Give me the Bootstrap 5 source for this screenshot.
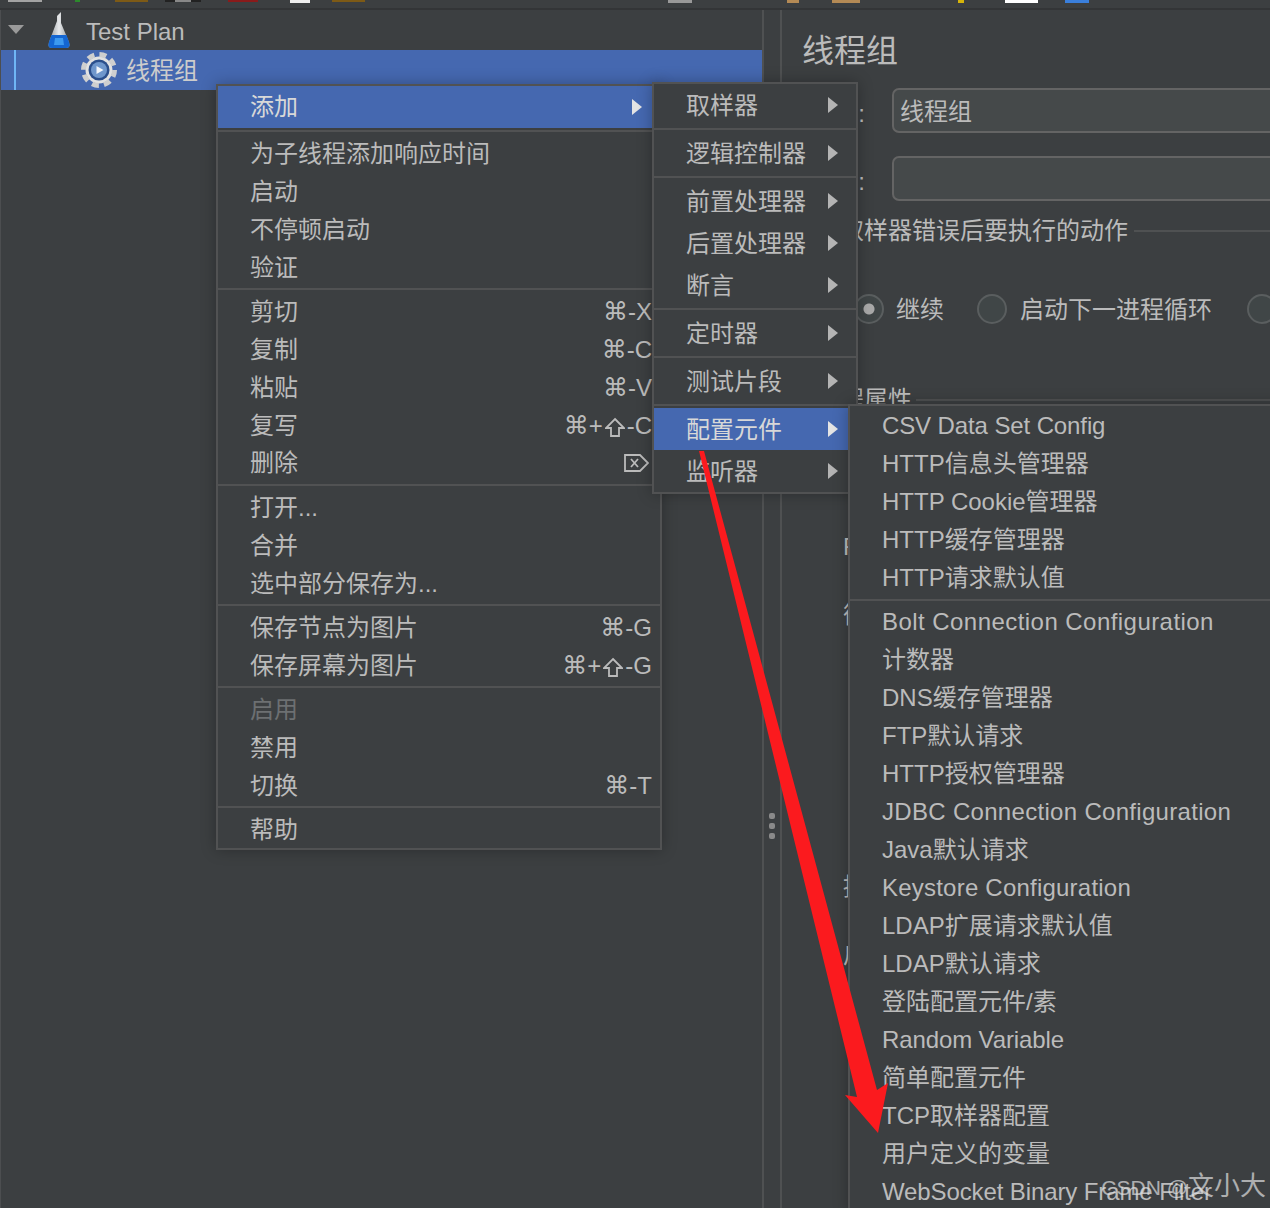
<!DOCTYPE html>
<html lang="zh">
<head>
<meta charset="utf-8">
<title>JMeter</title>
<link href="https://cdn.jsdelivr.net/npm/bootstrap@5.3.0/dist/css/bootstrap.min.css" rel="stylesheet">
<style>
html,body{margin:0;height:100%;background:#3c3f41}
.jm-app{position:relative;width:1270px;height:1208px;overflow:hidden;background:#3c3f41;color:#bbb;font-family:"Liberation Sans","Noto Sans CJK SC",sans-serif;font-size:24px;line-height:38px}
.jm-top{height:10px;border-bottom:2px solid #333537}
.jm-top svg{display:block}
.jm-main{height:1198px}
.jm-tree{width:764px;border-right:2px solid #4f5152;border-left:1px solid #4c4e50;flex:none}
.jm-tree-row{height:40px}
.jm-tree-first{padding-left:7px}
.jm-tree-first span{padding-top:3px}
.jm-flask{margin-left:23px;margin-right:15px}
.jm-sel{background:#4568b0;padding-left:13px;color:#ccc}
.jm-sel-in{border-left:2px solid #6fb5f5;height:100%;padding-left:65px;gap:10px}
.jm-sel-in span{padding-top:2px;margin-left:-1px}
.jm-split{width:16px;flex:none}
.jm-grip{width:6px;height:6px;border-radius:2px;background:#8a8a8a}
.jm-split-in{margin-top:803px}
.jm-right{border-left:2px solid #4f5152;flex:1;min-width:0;padding-top:20px;overflow:hidden}
.jm-h{font-size:32px;line-height:42px;height:40px;margin-left:20px}
.jm-frow{height:45px;margin-top:18px}
.jm-frow-b{margin-top:23px}
.jm-colon{width:83px;text-align:right;margin-right:27px;flex:none;padding-top:7px}
.jm-input{flex:none;width:420px;height:45px;background:#45494a;border:2px solid #646464;border-radius:7px;color:#bbb;font-size:24px;line-height:36px;padding:0 6px 2px;box-shadow:none}
.jm-input:focus{background:#45494a;color:#bbb;border-color:#646464;box-shadow:none}
.jm-sec{height:30px;line-height:30px;margin-left:34px;gap:6px;white-space:nowrap}
.jm-sec i{flex:1;height:2px;background:#4f5152;display:block}
.jm-sec1{margin-top:15px}
.jm-sec2{margin-top:61px;gap:4px}
.jm-radios{height:30px;margin-top:48px;margin-left:72px;white-space:nowrap}
.jm-radio{appearance:none;width:30px;height:30px;border-radius:50%;border:2px solid #5a5e5f;background:#404647;flex:none;display:block;margin:0}
.jm-radio:checked{background:radial-gradient(circle,#a9a9a9 0 5px,#404647 6px)}
.jm-rl1{margin-left:12px;margin-right:33px;padding-top:2px}
.jm-rl2{margin-left:13px;margin-right:35px;padding-top:2px}
.jm-lab{height:30px;line-height:30px;margin-left:61px;width:6px;overflow:hidden;white-space:nowrap}
.jm-l1{margin-top:117px}.jm-l2{margin-top:38px}.jm-l3{margin-top:242px}.jm-l4{margin-top:38px}
.jm-menu.dropdown-menu{position:absolute;display:block;margin:0;padding:0;border:2px solid #515253;border-radius:0;background:#3c3f41;box-shadow:0 0 14px rgba(0,0,0,.28);font-size:24px;color:#bbb;min-width:0}
.jm-menu .dropdown-item{color:#bbb;padding:0 8px 0 32px;height:38px;line-height:38px;font-size:24px;background:transparent}
.jm-menu .dropdown-item.active{background:#4568b0;color:#d8d8d8}
.jm-menu .dropdown-item.disabled{color:#6d7072}
.jm-menu .dropdown-divider{margin:2px 0;border-top:2px solid #515253;height:0;opacity:1}
.jm-m1{left:216px;top:84px;width:446px;z-index:2}
.jm-m1 .dropdown-item{line-height:40px}
.jm-m1 .jm-tall{height:42px;line-height:42px}
.jm-m2 .dropdown-item{height:42px;line-height:40px}
.jm-m2 .dropdown-item>span:first-child{padding-top:2px}
.jm-m2{left:652px;top:82px;width:206px;z-index:3}
.jm-m3{left:848px;top:404px;width:460px;z-index:4;padding-top:1px!important}
.jm-tri{width:0;height:0;border-left:10px solid #b4b4b4;border-top:8px solid transparent;border-bottom:8px solid transparent;margin-right:10px;flex:none}
.active>.jm-tri{border-left-color:#e4e4e4}
.jm-sym{font-family:"DejaVu Sans",sans-serif;font-size:25px}
.jm-shift{display:inline-block;vertical-align:-3px;margin:0 2px}
.jm-s1{letter-spacing:.45px}.jm-s2{letter-spacing:.31px}.jm-s3{letter-spacing:.22px}.jm-s4{letter-spacing:-.11px}
.jm-arrow{position:absolute;left:0;top:0;z-index:5;pointer-events:none}
.jm-wm{position:absolute;right:4px;top:1170px;z-index:6;font-size:21px;line-height:32px;color:rgba(225,225,225,.7);white-space:nowrap}
.jm-wm b{font-size:26px;font-weight:400}
.jm-del{display:block;margin-right:3px}
</style>
</head>
<body>
<div class="jm-app">
  <div class="jm-top">
    <svg width="1270" height="8" viewBox="0 0 1270 8">
      <rect x="8" width="34" height="2" fill="#a3a3a3"/><rect x="75" width="5" height="2" fill="#2c8a2c"/><rect x="115" width="33" height="2" fill="#7d5a16"/><rect x="165" width="12" height="2" fill="#222"/><rect x="175" width="16" height="2" fill="#888"/><rect x="191" width="10" height="2" fill="#222"/><rect x="228" width="30" height="2" fill="#8a1b1b"/><rect x="290" width="20" height="3" fill="#eee"/><rect x="332" width="33" height="2" fill="#7d5a16"/><rect x="668" width="24" height="3" fill="#999"/><rect x="787" width="12" height="3" fill="#b48a55"/><rect x="832" width="28" height="3" fill="#b48a55"/><rect x="958" width="6" height="3" fill="#d6b40a"/><rect x="1005" width="33" height="3" fill="#fff"/><rect x="1065" width="24" height="3" fill="#3a7fdc"/>
    </svg>
  </div>
  <div class="jm-main d-flex">
    <div class="jm-tree">
      <div class="jm-tree-row jm-tree-first d-flex align-items-center">
        <svg width="16" height="10" viewBox="0 0 16 10"><path d="M0 0H16L8 9Z" fill="#9a9a9a"/></svg>
        <svg class="jm-flask" width="24" height="36" viewBox="0 0 24 36"><defs><linearGradient id="jf" x1="0" x2="1" y1="0" y2="0"><stop offset="0" stop-color="#8f9396"/><stop offset=".5" stop-color="#e6e8ea"/><stop offset="1" stop-color="#8f9396"/></linearGradient></defs><path d="M10 9V4L14 0V11L22 30Q24 36 19 36H5Q0 36 2 30Z" fill="url(#jf)"/><path d="M4.500 23H19.500L22 30Q24 36 19 36H5Q0 36 2 30Z" fill="#1466d2"/><path d="M8 26H16L17 33H7Z" fill="#3d9af0"/></svg>
        <span>Test Plan</span>
      </div>
      <div class="jm-tree-row jm-sel">
        <div class="jm-sel-in d-flex align-items-center">
          <svg width="36" height="38" viewBox="0 0 36 38"><circle cx="18" cy="19" r="13.500" fill="#e2e2e2"/><circle cx="18" cy="19" r="15.500" fill="none" stroke="#cfcfcf" stroke-width="5" stroke-dasharray="7 5.170"/><circle cx="18" cy="19" r="10.500" fill="#2b4f8c"/><circle cx="18" cy="19" r="8" fill="#6f97cc"/><path d="M15.500 15L22.500 19L15.500 23Z" fill="#f2f6fb"/></svg>
          <span>线程组</span>
        </div>
      </div>
    </div>
    <div class="jm-split d-flex flex-column align-items-center">
      <div class="jm-split-in d-flex flex-column gap-1"><div class="jm-grip"></div><div class="jm-grip"></div><div class="jm-grip"></div></div>
    </div>
    <div class="jm-right">
      <div class="jm-h">线程组</div>
      <div class="jm-frow d-flex"><div class="jm-colon">:</div><input class="form-control jm-input" value="线程组"></div>
      <div class="jm-frow jm-frow-b d-flex"><div class="jm-colon">:</div><input class="form-control jm-input" value=""></div>
      <div class="jm-sec jm-sec1 d-flex align-items-center"><span>在取样器错误后要执行的动作</span><i></i></div>
      <div class="jm-radios d-flex align-items-center">
        <input class="jm-radio" type="radio" name="a" checked><span class="jm-rl1">继续</span>
        <input class="jm-radio" type="radio" name="a"><span class="jm-rl2">启动下一进程循环</span>
        <input class="jm-radio" type="radio" name="a">
      </div>
      <div class="jm-sec jm-sec2 d-flex align-items-center"><span>线程属性</span><i></i></div>
      <div class="jm-lab jm-l1">F</div>
      <div class="jm-lab jm-l2">循</div>
      <div class="jm-lab jm-l3">持</div>
      <div class="jm-lab jm-l4">启</div>
    </div>
  </div>

  <ul class="dropdown-menu show jm-menu jm-m1 list-unstyled">
    <li><a class="dropdown-item active jm-tall d-flex justify-content-between align-items-center" href="#"><span>添加</span><span class="jm-tri"></span></a></li>
    <li><hr class="dropdown-divider"></li>
    <li><a class="dropdown-item" href="#">为子线程添加响应时间</a></li>
    <li><a class="dropdown-item" href="#">启动</a></li>
    <li><a class="dropdown-item" href="#">不停顿启动</a></li>
    <li><a class="dropdown-item" href="#">验证</a></li>
    <li><hr class="dropdown-divider"></li>
    <li><a class="dropdown-item d-flex justify-content-between" href="#"><span>剪切</span><span><span class="jm-sym">⌘</span>-X</span></a></li>
    <li><a class="dropdown-item d-flex justify-content-between" href="#"><span>复制</span><span><span class="jm-sym">⌘</span>-C</span></a></li>
    <li><a class="dropdown-item d-flex justify-content-between" href="#"><span>粘贴</span><span><span class="jm-sym">⌘</span>-V</span></a></li>
    <li><a class="dropdown-item d-flex justify-content-between" href="#"><span>复写</span><span><span class="jm-sym">⌘</span>+<svg class="jm-shift" width="20" height="20" viewBox="0 0 20 20" fill="none" stroke="#bbb" stroke-width="1.800"><path d="M10 2L19 11H14V19H6V11H1Z"/></svg>-C</span></a></li>
    <li><a class="dropdown-item d-flex justify-content-between align-items-center" href="#"><span>删除</span><svg class="jm-del" width="25" height="18" viewBox="0 0 25 18" fill="none" stroke="#bbb" stroke-width="1.800"><path d="M1 1H16L24 9L16 17H1Z"/><path d="M7 5L14 13M14 5L7 13"/></svg></a></li>
    <li><hr class="dropdown-divider"></li>
    <li><a class="dropdown-item" href="#">打开...</a></li>
    <li><a class="dropdown-item" href="#">合并</a></li>
    <li><a class="dropdown-item" href="#">选中部分保存为...</a></li>
    <li><hr class="dropdown-divider"></li>
    <li><a class="dropdown-item d-flex justify-content-between" href="#"><span>保存节点为图片</span><span><span class="jm-sym">⌘</span>-G</span></a></li>
    <li><a class="dropdown-item d-flex justify-content-between" href="#"><span>保存屏幕为图片</span><span><span class="jm-sym">⌘</span>+<svg class="jm-shift" width="20" height="20" viewBox="0 0 20 20" fill="none" stroke="#bbb" stroke-width="1.800"><path d="M10 2L19 11H14V19H6V11H1Z"/></svg>-G</span></a></li>
    <li><hr class="dropdown-divider"></li>
    <li><a class="dropdown-item disabled" href="#">启用</a></li>
    <li><a class="dropdown-item" href="#">禁用</a></li>
    <li><a class="dropdown-item d-flex justify-content-between" href="#"><span>切换</span><span><span class="jm-sym">⌘</span>-T</span></a></li>
    <li><hr class="dropdown-divider"></li>
    <li><a class="dropdown-item" href="#">帮助</a></li>
  </ul>

  <ul class="dropdown-menu show jm-menu jm-m2 list-unstyled">
    <li><a class="dropdown-item d-flex justify-content-between align-items-center" href="#"><span>取样器</span><span class="jm-tri"></span></a></li>
    <li><hr class="dropdown-divider"></li>
    <li><a class="dropdown-item d-flex justify-content-between align-items-center" href="#"><span>逻辑控制器</span><span class="jm-tri"></span></a></li>
    <li><hr class="dropdown-divider"></li>
    <li><a class="dropdown-item d-flex justify-content-between align-items-center" href="#"><span>前置处理器</span><span class="jm-tri"></span></a></li>
    <li><a class="dropdown-item d-flex justify-content-between align-items-center" href="#"><span>后置处理器</span><span class="jm-tri"></span></a></li>
    <li><a class="dropdown-item d-flex justify-content-between align-items-center" href="#"><span>断言</span><span class="jm-tri"></span></a></li>
    <li><hr class="dropdown-divider"></li>
    <li><a class="dropdown-item d-flex justify-content-between align-items-center" href="#"><span>定时器</span><span class="jm-tri"></span></a></li>
    <li><hr class="dropdown-divider"></li>
    <li><a class="dropdown-item d-flex justify-content-between align-items-center" href="#"><span>测试片段</span><span class="jm-tri"></span></a></li>
    <li><hr class="dropdown-divider"></li>
    <li><a class="dropdown-item active d-flex justify-content-between align-items-center" href="#"><span>配置元件</span><span class="jm-tri"></span></a></li>
    <li><a class="dropdown-item d-flex justify-content-between align-items-center" href="#"><span>监听器</span><span class="jm-tri"></span></a></li>
  </ul>

  <ul class="dropdown-menu show jm-menu jm-m3 list-unstyled">
    <li><a class="dropdown-item jm-s4" href="#">CSV Data Set Config</a></li>
    <li><a class="dropdown-item" href="#">HTTP信息头管理器</a></li>
    <li><a class="dropdown-item" href="#">HTTP Cookie管理器</a></li>
    <li><a class="dropdown-item" href="#">HTTP缓存管理器</a></li>
    <li><a class="dropdown-item" href="#">HTTP请求默认值</a></li>
    <li><hr class="dropdown-divider"></li>
    <li><a class="dropdown-item jm-s1" href="#">Bolt Connection Configuration</a></li>
    <li><a class="dropdown-item" href="#">计数器</a></li>
    <li><a class="dropdown-item" href="#">DNS缓存管理器</a></li>
    <li><a class="dropdown-item" href="#">FTP默认请求</a></li>
    <li><a class="dropdown-item" href="#">HTTP授权管理器</a></li>
    <li><a class="dropdown-item jm-s2" href="#">JDBC Connection Configuration</a></li>
    <li><a class="dropdown-item" href="#">Java默认请求</a></li>
    <li><a class="dropdown-item jm-s3" href="#">Keystore Configuration</a></li>
    <li><a class="dropdown-item" href="#">LDAP扩展请求默认值</a></li>
    <li><a class="dropdown-item" href="#">LDAP默认请求</a></li>
    <li><a class="dropdown-item" href="#">登陆配置元件/素</a></li>
    <li><a class="dropdown-item jm-s4" href="#">Random Variable</a></li>
    <li><a class="dropdown-item" href="#">简单配置元件</a></li>
    <li><a class="dropdown-item" href="#">TCP取样器配置</a></li>
    <li><a class="dropdown-item" href="#">用户定义的变量</a></li>
    <li><a class="dropdown-item jm-s4" href="#">WebSocket Binary Frame Filter</a></li>
  </ul>

  <svg class="jm-arrow" width="1270" height="1208" viewBox="0 0 1270 1208"><path d="M699 451L704 451L877 1090L888 1083L878 1133L845 1095L857 1097Z" fill="#fb1a1e"/></svg>
  <div class="jm-wm">CSDN @<b>文小大</b></div>
</div>
<script src="https://cdn.jsdelivr.net/npm/bootstrap@5.3.0/dist/js/bootstrap.bundle.min.js"></script>
</body>
</html>
